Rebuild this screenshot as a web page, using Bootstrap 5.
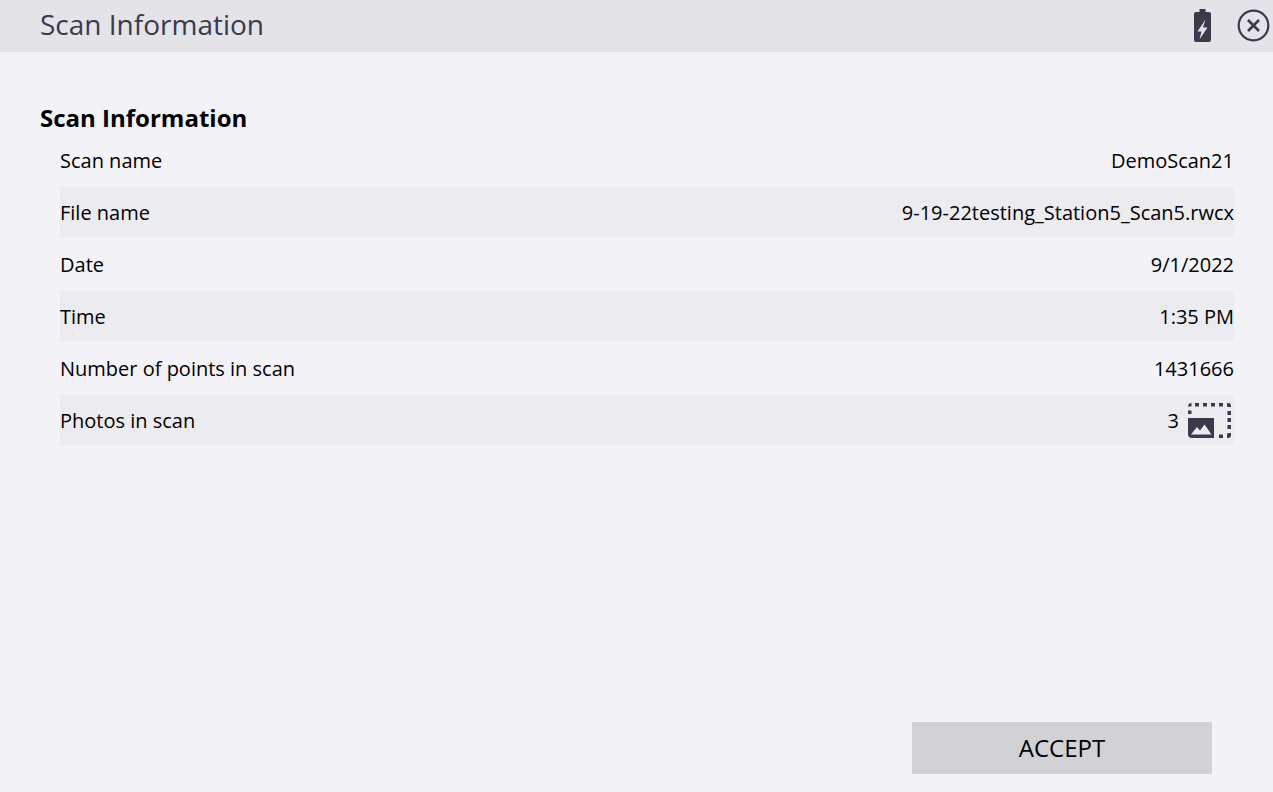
<!DOCTYPE html>
<html lang="en"><head><meta charset="utf-8"><title>Scan Information</title>
<link href="https://cdn.jsdelivr.net/npm/bootstrap@5.3.0/dist/css/bootstrap.min.css" rel="stylesheet">
<style>
html,body{height:100%}
body{background:#f2f2f7;color:#000;font-family:"Open Sans","Noto Sans",sans-serif;font-size:20px;overflow:hidden}
.shell{height:792px}
.topbar{height:52px;background:#e3e3e8;padding-left:40px;padding-right:3px;color:#3a3a4c}
.topbar-title{font-size:28px;line-height:48px;padding-bottom:4px;font-weight:400}
.top-icons{margin-bottom:2px}
.sec-title{font-size:24px;font-weight:700;margin:0 0 0 40px;line-height:32px;padding-top:50px;height:82px}
.rows{margin:0 39px 0 60px}
.data-row{height:52px;line-height:54px}
.data-row:nth-child(even){background:#ebebf0}
.accept{width:300px;height:52px;background:#d1d1d6;border:0;border-radius:0;font-size:24px;color:#000;margin:0 61px 18px 0;padding:0}
.accept:hover{background:#d1d1d6}
.close-ic{margin-left:26px}
.photo-ic{margin-left:9px;margin-right:3px}
.photo-count{margin-top:2px}
</style></head><body>
<div class="shell d-flex flex-column">
<div class="topbar d-flex align-items-center justify-content-between">
<div class="topbar-title">Scan Information</div>
<div class="top-icons d-flex align-items-center">
<svg width="17" height="33" viewBox="0 0 17 33"><path fill="#3a3a4c" d="M5.500 0h6v3H15a2 2 0 0 1 2 2v26a2 2 0 0 1-2 2H2a2 2 0 0 1-2-2V5a2 2 0 0 1 2-2h3.500z"/><path fill="#e3e3e8" d="M11.500 10.500 3.500 22.500h4L5.500 30.500 13.500 18.500h-4.500z"/></svg>
<svg class="close-ic" width="33" height="33" viewBox="0 0 33 33"><circle cx="16.500" cy="16.500" r="14.800" fill="none" stroke="#3a3a4c" stroke-width="2.200"/><path d="m11 11 11 11m0-11-11 11" stroke="#3a3a4c" stroke-width="2.600" fill="none"/></svg>
</div></div>
<h2 class="sec-title">Scan Information</h2>
<div class="rows">
<div class="data-row d-flex justify-content-between"><span>Scan name</span><span>DemoScan21</span></div>
<div class="data-row d-flex justify-content-between"><span>File name</span><span>9-19-22testing_Station5_Scan5.rwcx</span></div>
<div class="data-row d-flex justify-content-between"><span>Date</span><span>9/1/2022</span></div>
<div class="data-row d-flex justify-content-between"><span>Time</span><span>1:35 PM</span></div>
<div class="data-row d-flex justify-content-between"><span>Number of points in scan</span><span>1431666</span></div>
<div class="data-row d-flex justify-content-between"><span>Photos in scan</span><span class="d-flex align-items-center"><span class="photo-count">3</span><svg class="photo-ic" width="43" height="35" viewBox="0 0 43 35"><g fill="#3a3a4c"><path d="M0 3.500a3.500 3.500 0 0 1 3.500-3.500v3.500z"/><rect x="7" y="0" width="4" height="3.500"/><rect x="15" y="0" width="4" height="3.500"/><rect x="23" y="0" width="4" height="3.500"/><rect x="31" y="0" width="4" height="3.500"/><path d="M39 0h1a3 3 0 0 1 3 3v1h-3.500V3.500H39z"/><rect x="0" y="7.500" width="3.500" height="3.500"/><rect x="39.500" y="8" width="3.500" height="4"/><rect x="39.500" y="15" width="3.500" height="4"/><rect x="39.500" y="22" width="3.500" height="4"/><path d="M39.500 30H43v2a3 3 0 0 1-3 3h-1v-3.500h.5z"/><rect x="31" y="31.500" width="4" height="3.500"/><path d="M0 15h26v20H4a4 4 0 0 1-4-4z"/></g><path fill="#ebebf0" d="M3 31.500 9 24l3 3.500 4.500-6 7 10z"/></svg></span></div>
</div>
<div class="mt-auto d-flex justify-content-end"><button type="button" class="btn accept">ACCEPT</button></div>
</div>
<script src="https://cdn.jsdelivr.net/npm/bootstrap@5.3.0/dist/js/bootstrap.bundle.min.js"></script>
</body></html>
